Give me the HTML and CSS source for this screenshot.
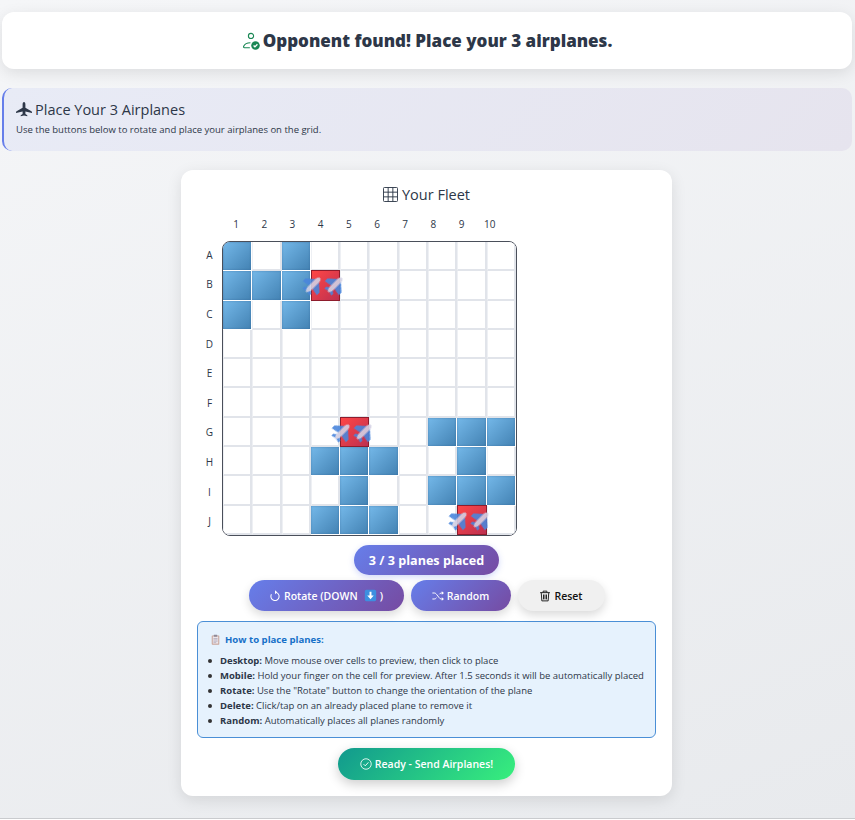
FILE: index.html
```html
<!DOCTYPE html>
<html lang="en">
<head>
    <meta charset="UTF-8">
    <title>Airplanes - Place your fleet</title>
    <link rel="stylesheet" href="styles.css">
</head>
<body>
    <svg class="defs" width="0" height="0">
        <symbol id="plane" viewBox="0 0 24 24">
            <path fill="#4a86dc" d="M10 4 0 13 0 17.500 10 15.500Z M14 4 24 13 24 17.500 14 15.500Z M10 18 6 21 6 24 12 22.500 18 24 18 21 14 18Z"/>
            <path fill="#d3d0e4" d="M12 0C14 0 15 3 15 5L15 17C15 20 13.400 23 12 24 10.600 23 9 20 9 17L9 5C9 3 10 0 12 0Z"/>
        </symbol>
    </svg>

    <div class="status-card">
        <svg class="status-icon" viewBox="0 0 16 16">
            <path fill="none" stroke="#198754" stroke-width="1" d="M8 1.200a2.300 2.300 0 1 1 0 4.600 2.300 2.300 0 0 1 0-4.600Z M7 14H2.200c-.8 0-1-.6-.7-1.300C2.300 10.800 4.500 9.500 7.500 9.500"/>
            <circle cx="12" cy="12" r="3.800" fill="#198754"/>
            <path fill="none" stroke="#fff" stroke-width="1.200" d="M10.300 12l1.200 1.200 2.200-2.300"/>
        </svg>
        <h2>Opponent found! Place your 3 airplanes.</h2>
    </div>

    <div class="instructions">
        <h3>
            <svg class="title-icon" viewBox="0 0 16 16"><path fill="#2d3748" d="M8 0c-.9 0-1.400 1.300-1.400 2.500v3.200L.6 9.300c-.4.200-.6.500-.6.900v.9l6.600-1.700v2.500l-1.900 1.400v1l3.300-.8 3.300.8v-1l-1.900-1.400V9.400l6.600 1.700v-.9c0-.4-.2-.7-.6-.9L9.400 5.700V2.500C9.400 1.300 8.900 0 8 0Z"/></svg>
            Place Your 3 Airplanes
        </h3>
        <p>Use the buttons below to rotate and place your airplanes on the grid.</p>
    </div>

    <div class="fleet-card">
        <h4 class="fleet-title">
            <svg class="grid-icon" viewBox="0 0 16 16"><path fill="none" stroke="#2d3748" stroke-width="1" d="M1.500.5h13a1 1 0 0 1 1 1v13a1 1 0 0 1-1 1h-13a1 1 0 0 1-1-1v-13a1 1 0 0 1 1-1Z M5.500.5v15 M10.500.5v15 M.5 5.500h15 M.5 10.500h15"/></svg>
            Your Fleet
        </h4>

        <div class="col-labels">
            <span>1</span><span>2</span><span>3</span><span>4</span><span>5</span>
            <span>6</span><span>7</span><span>8</span><span>9</span><span>10</span>
        </div>

        <div class="board-row">
            <div class="row-labels">
                <span>A</span><span>B</span><span>C</span><span>D</span><span>E</span>
                <span>F</span><span>G</span><span>H</span><span>I</span><span>J</span>
            </div>
            <div class="board" id="board"></div>
        </div>

        <div class="counter-row"><span class="counter">3 / 3 planes placed</span></div>

        <div class="controls">
            <button class="btn btn-purple btn-rotate">
                <svg class="btn-icon" viewBox="0 0 16 16"><path fill="none" stroke="currentColor" stroke-width="1.400" d="M8 3a5.500 5.500 0 1 1-4.800 2.800"/><path fill="currentColor" d="M8 .2v5.600L11 3Z"/></svg>
                Rotate (DOWN
                <svg class="emoji" viewBox="0 0 16 16"><rect x="1" y="1" width="14" height="14" rx="2" fill="#3d8fe0"/><path fill="#fff" d="M6.800 3.500h2.400v4.500H12L8 12.500 4 8h2.800Z"/></svg>
                )
            </button>
            <button class="btn btn-purple btn-random">
                <svg class="btn-icon" viewBox="0 0 16 16"><path fill="none" stroke="currentColor" stroke-width="1.300" d="M.5 4H3c1.500 0 2.300.8 3.200 2l3.400 4.300c.8 1 1.500 1.700 2.900 1.700H14 M.5 12H3c1.500 0 2.300-.8 3-1.700 M9.800 5.700C10.600 4.700 11.300 4 12.500 4H14"/><path fill="currentColor" d="M13 1.600 16 4l-3 2.400Z M13 9.600 16 12l-3 2.400Z"/></svg>
                Random
            </button>
            <button class="btn btn-light btn-reset">
                <svg class="btn-icon" viewBox="0 0 16 16"><path fill="none" stroke="#222" stroke-width="1.300" d="M1.500 3.500h13 M5.500 3.500V1.500h5v2 M3 3.500l.8 11h8.400l.8-11 M6 6v6.500 M8 6v6.500 M10 6v6.500"/></svg>
                Reset
            </button>
        </div>

        <div class="help-box">
            <div class="help-title">
                <svg class="clip" viewBox="0 0 16 16"><rect x="2.500" y="2" width="11" height="13.500" rx="1" fill="#c9a59a"/><rect x="4" y="3.500" width="8" height="10.500" fill="#eee8ec"/><rect x="5.500" y="1" width="5" height="3" rx=".6" fill="#8f8a98"/><path stroke="#a9a3b5" d="M5 6.500h6M5 8.500h6M5 10.500h6M5 12.500h4"/></svg>
                How to place planes:
            </div>
            <ul>
                <li><strong>Desktop:</strong> Move mouse over cells to preview, then click to place</li>
                <li><strong>Mobile:</strong> Hold your finger on the cell for preview. After 1.5 seconds it will be automatically placed</li>
                <li><strong>Rotate:</strong> Use the "Rotate" button to change the orientation of the plane</li>
                <li><strong>Delete:</strong> Click/tap on an already placed plane to remove it</li>
                <li><strong>Random:</strong> Automatically places all planes randomly</li>
            </ul>
        </div>

        <div class="ready-row">
            <button class="btn btn-ready">
                <svg class="btn-icon" viewBox="0 0 16 16"><circle cx="8" cy="8" r="7" fill="none" stroke="currentColor" stroke-width="1.100"/><path fill="none" stroke="currentColor" stroke-width="1.200" d="M4.800 8.200l2.200 2.200 4.200-4.600"/></svg>
                Ready - Send Airplanes!
            </button>
        </div>
    </div>

    <script>
        // fleet layout: b = body of a plane, h = head
        const layout = [
            "b.b.......",
            "bbbh......",
            "b.b.......",
            "..........",
            "..........",
            "..........",
            "....h..bbb",
            "...bbb..b.",
            "....b..bbb",
            "...bbb..h."
        ];

        const board = document.getElementById("board");
        layout.forEach(function (row) {
            for (const ch of row) {
                const cell = document.createElement("div");
                cell.className = "cell";
                if (ch === "b") cell.classList.add("plane");
                if (ch === "h") {
                    cell.classList.add("head");
                    cell.innerHTML =
                        '<svg class="mark mark-left"><use href="#plane"/></svg>' +
                        '<svg class="mark mark-right"><use href="#plane"/></svg>';
                }
                board.appendChild(cell);
            }
        });
    </script>
</body>
</html>
```

FILE: styles.css
```css
/* General */
html {
    height: 100%;
    background: #fff;
}
body {
    margin: 0;
    padding: 12px 3px 0 2px;
    height: 819px;
    box-sizing: border-box;
    border-bottom: 1px solid #c9cbce;
    font-family: "Open Sans", "Noto Sans", sans-serif;
    color: #2d3748;
    background: linear-gradient(160deg, #f5f6f8 0%, #e8eaed 100%);
    overflow: hidden;
}
.defs {
    position: absolute;
}

/* Status */
.status-card {
    height: 57px;
    margin-bottom: 19px;
    display: flex;
    align-items: center;
    justify-content: center;
    gap: 3px;
    background: #fff;
    border-radius: 12px;
    box-shadow: 0 4px 15px rgba(0, 0, 0, 0.1);
}
.status-card h2 {
    margin: 0;
    font-size: 17px;
    font-weight: 800;
    color: #2d3748;
}
.status-icon {
    width: 18px;
    height: 18px;
}

/* Instructions */
.instructions {
    height: 63px;
    box-sizing: border-box;
    margin-bottom: 19px;
    padding: 12px 12px;
    border-left: 2px solid #667eea;
    border-radius: 10px;
    background: linear-gradient(135deg, #e8ebf6, #e6e4ee);
}
.instructions h3 {
    margin: 0 0 4px;
    font-size: 14.500px;
    font-weight: 500;
    line-height: 20px;
    display: flex;
    align-items: center;
    gap: 3px;
}
.title-icon {
    width: 16px;
    height: 16px;
}
.instructions p {
    margin: 0;
    font-size: 9.500px;
    line-height: 12px;
}

/* Fleet card */
.fleet-card {
    width: 491px;
    height: 626px;
    box-sizing: border-box;
    margin: 0 0 0 179px;
    padding: 14px 16px 0;
    background: #fff;
    border-radius: 12px;
    box-shadow: 0 4px 15px rgba(0, 0, 0, 0.1);
}
.fleet-title {
    margin: 0;
    height: 20px;
    display: flex;
    align-items: center;
    justify-content: center;
    gap: 4px;
    font-size: 14.500px;
    font-weight: 500;
}
.grid-icon {
    width: 15px;
    height: 15px;
}
.col-labels {
    display: grid;
    grid-template-columns: repeat(10, 28.200px);
    margin: 12px 0 0 25px;
    height: 16px;
    text-align: center;
    font-size: 10px;
    line-height: 16px;
}
.board-row {
    display: flex;
    margin-top: 9px;
}
.row-labels {
    width: 25px;
    display: grid;
    grid-template-rows: repeat(10, 1fr);
    margin-top: -1px;
    font-size: 10px;
}
.row-labels span {
    display: flex;
    align-items: center;
    justify-content: center;
}
.board {
    width: 295px;
    height: 295px;
    box-sizing: border-box;
    display: grid;
    grid-template-columns: repeat(10, 1fr);
    grid-template-rows: repeat(10, 1fr);
    border: 1px solid #4a4f5a;
    border-radius: 8px;
    background: #e3e6ec;
    overflow: hidden;
}
.cell {
    position: relative;
    background: #fff;
    border-left: 1px solid #eef0f4;
    border-right: 2px solid #e1e4ea;
    border-bottom: 2px solid #e1e4ea;
}
.cell.plane {
    background: linear-gradient(135deg, #74b8e9, #4382b3);
    border: 1px solid #fff;
    border-width: 0 1px 1px 0;
    box-shadow: inset 0 0 2px rgba(40, 90, 140, 0.5);
}
.cell.head {
    z-index: 1;
    margin-top: -1px;
    background: linear-gradient(135deg, #ff4646, #bd3050);
    border: 1px solid #8e1c2c;
}
.mark {
    position: absolute;
    top: 4px;
    width: 20px;
    height: 20px;
    transform: rotate(45deg);
    filter: blur(0.3px);
    opacity: 0.9;
}
.mark-left {
    left: -9px;
}
.mark-right {
    left: 13px;
}

/* Counter and controls */
.counter-row {
    display: flex;
    justify-content: center;
    margin-top: 9px;
}
.counter {
    width: 145px;
    height: 30px;
    display: flex;
    align-items: center;
    justify-content: center;
    border-radius: 15px;
    color: #fff;
    font-size: 12.600px;
    font-weight: 700;
    background: linear-gradient(135deg, #667eea, #764ba2);
    box-shadow: 0 2px 6px rgba(102, 126, 234, 0.3);
}
.controls {
    display: flex;
    justify-content: center;
    gap: 7px;
    margin-top: 5px;
}
.btn {
    height: 31px;
    padding: 0;
    display: flex;
    align-items: center;
    justify-content: center;
    gap: 3px;
    border: 0;
    border-radius: 16px;
    font-family: inherit;
    font-size: 10.500px;
    font-weight: 600;
}
.btn-purple {
    color: #fff;
    background: linear-gradient(135deg, #667eea, #764ba2);
    box-shadow: 0 4px 10px rgba(0, 0, 0, 0.15);
}
.btn-light {
    color: #111;
    background: #f0f0f0;
    box-shadow: 0 4px 10px rgba(0, 0, 0, 0.15);
}
.btn-rotate {
    width: 155px;
}
.btn-random {
    width: 100px;
}
.btn-reset {
    width: 87px;
}
.btn-icon {
    width: 12px;
    height: 12px;
}
.emoji {
    width: 13px;
    height: 13px;
    margin-left: 3px;
}

/* Help box */
.help-box {
    height: 117px;
    box-sizing: border-box;
    margin-top: 10px;
    padding: 11px 9px 0 22px;
    border: 1px solid #4a8fd6;
    border-radius: 6px;
    background: #e6f2fd;
}
.help-title {
    display: flex;
    align-items: center;
    gap: 4px;
    margin-left: -10px;
    font-size: 9.600px;
    font-weight: 700;
    color: #1670c8;
}
.clip {
    width: 11px;
    height: 11px;
}
.help-box ul {
    margin: 7px 0 0;
    padding: 0;
    list-style: none;
    font-size: 9.500px;
    line-height: 15px;
}
.help-box li::before {
    content: "";
    display: inline-block;
    width: 4px;
    height: 4px;
    margin: 0 8px 1px -12px;
    border-radius: 50%;
    background: #333;
    vertical-align: middle;
}

/* Ready */
.ready-row {
    display: flex;
    justify-content: center;
    margin-top: 10px;
}
.btn-ready {
    width: 177px;
    height: 32px;
    color: #fff;
    background: linear-gradient(135deg, #11998e, #38ef7d);
    box-shadow: 0 4px 12px rgba(0, 0, 0, 0.2);
}
```
